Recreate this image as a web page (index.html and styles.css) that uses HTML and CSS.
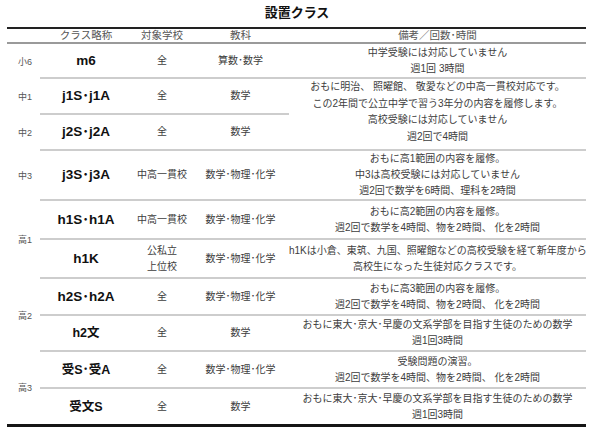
FILE: index.html
```html
<!DOCTYPE html>
<html lang="ja">
<head>
<meta charset="utf-8">
<title>設置クラス</title>
<link rel="stylesheet" href="styles.css">
</head>
<body>
<h1 class="title">設置クラス</h1>
<table class="classes">
  <colgroup>
    <col class="c-grade">
    <col class="c-cls">
    <col class="c-target">
    <col class="c-subj">
    <col class="c-note">
  </colgroup>
  <thead>
    <tr class="head">
      <th></th>
      <th>クラス略称</th>
      <th>対象学校</th>
      <th>教科</th>
      <th>備考／回数･時間</th>
    </tr>
  </thead>
  <tbody>
    <tr class="r35">
      <td class="grade">小6</td>
      <td class="cls">m6</td>
      <td>全</td>
      <td>算数･数学</td>
      <td>中学受験には対応していません<br>週1回 3時間</td>
    </tr>
    <tr class="r35">
      <td class="grade">中1</td>
      <td class="cls">j1S･j1A</td>
      <td>全</td>
      <td>数学</td>
      <td rowspan="2" class="note4">おもに明治、 照曜館、 敬愛などの中高一貫校対応です。<br>この2年間で公立中学で習う3年分の内容を履修します。<br>高校受験には対応していません<br>週2回で4時間</td>
    </tr>
    <tr class="r35">
      <td class="grade">中2</td>
      <td class="cls">j2S･j2A</td>
      <td>全</td>
      <td>数学</td>
    </tr>
    <tr class="r50">
      <td class="grade">中3</td>
      <td class="cls">j3S･j3A</td>
      <td>中高一貫校</td>
      <td>数学･物理･化学</td>
      <td>おもに高1範囲の内容を履修。<br>中3は高校受験には対応していません<br>週2回で数学を6時間、理科を2時間</td>
    </tr>
    <tr class="r39">
      <td class="grade" rowspan="2">高1</td>
      <td class="cls">h1S･h1A</td>
      <td>中高一貫校</td>
      <td>数学･物理･化学</td>
      <td>おもに高2範囲の内容を履修。<br>週2回で数学を4時間、物を2時間、 化を2時間</td>
    </tr>
    <tr class="r39">
      <td class="cls">h1K</td>
      <td>公私立<br>上位校</td>
      <td>数学･物理･化学</td>
      <td>h1Kは小倉、東筑、九国、照曜館などの高校受験を経て新年度から<br>高校生になった生徒対応クラスです。</td>
    </tr>
    <tr class="r37">
      <td class="grade" rowspan="2">高2</td>
      <td class="cls">h2S･h2A</td>
      <td>全</td>
      <td>数学･物理･化学</td>
      <td>おもに高3範囲の内容を履修。<br>週2回で数学を4時間、物を2時間、 化を2時間</td>
    </tr>
    <tr class="r36">
      <td class="cls"><span class="cj">h2文</span></td>
      <td>全</td>
      <td>数学</td>
      <td>おもに東大･京大･早慶の文系学部を目指す生徒のための数学<br>週1回3時間</td>
    </tr>
    <tr class="r37">
      <td class="grade" rowspan="2">高3</td>
      <td class="cls"><span class="cj">受S･受A</span></td>
      <td>全</td>
      <td>数学･物理･化学</td>
      <td>受験問題の演習。<br>週2回で数学を4時間、物を2時間、 化を2時間</td>
    </tr>
    <tr class="r35 last">
      <td class="cls"><span class="cj">受文S</span></td>
      <td>全</td>
      <td>数学</td>
      <td>おもに東大･京大･早慶の文系学部を目指す生徒のための数学<br>週1回3時間</td>
    </tr>
  </tbody>
</table>
</body>
</html>
```

FILE: styles.css
```css
html, body {
  background: #ffffff;
}

body {
  margin: 0;
  padding: 4px 8px 0 7px;
  font-family: "Liberation Sans", "Noto Sans CJK JP", sans-serif;
  color: #333333;
}

.title {
  margin: 0 0 5px;
  text-align: center;
  font-size: 13px;
  line-height: 18px;
  font-weight: bold;
  color: #111111;
}

.classes {
  width: 579px;
  table-layout: fixed;
  border-collapse: separate;
  border-spacing: 0;
  border-top: 2px solid #222222;
  border-bottom: 3px solid #161616;
}

.c-grade { width: 33px; }
.c-cls { width: 92px; }
.c-target { width: 60px; }
.c-subj { width: 97px; }
.c-note { width: 297px; }

.classes th {
  padding: 0;
  font-weight: normal;
  font-size: 10.5px;
  line-height: 13px;
  color: #555555;
  text-align: center;
  border-bottom: 2px solid #9a9a9a;
}

.head { height: 15px; }

.classes td {
  padding: 0;
  text-align: center;
  vertical-align: middle;
  font-size: 10px;
  line-height: 16px;
  color: #3d3d3d;
  border-bottom: 2px solid #cdcdcd;
  white-space: nowrap;
}

.classes td.grade {
  border-bottom: none;
  font-size: 9px;
  color: #555555;
  padding-left: 3px;
}

.classes td.cls {
  font-size: 13.5px;
  font-weight: bold;
  color: #111111;
}

.cj {
  font-size: 12.5px;
}

.classes td.note4 {
  line-height: 16.5px;
  padding-bottom: 4px;
}

.classes .last td {
  border-bottom: none;
}

.r35 { height: 35px; }
.r36 { height: 36px; }
.r37 { height: 37px; }
.r39 { height: 39px; }
.r50 { height: 50px; }
```
